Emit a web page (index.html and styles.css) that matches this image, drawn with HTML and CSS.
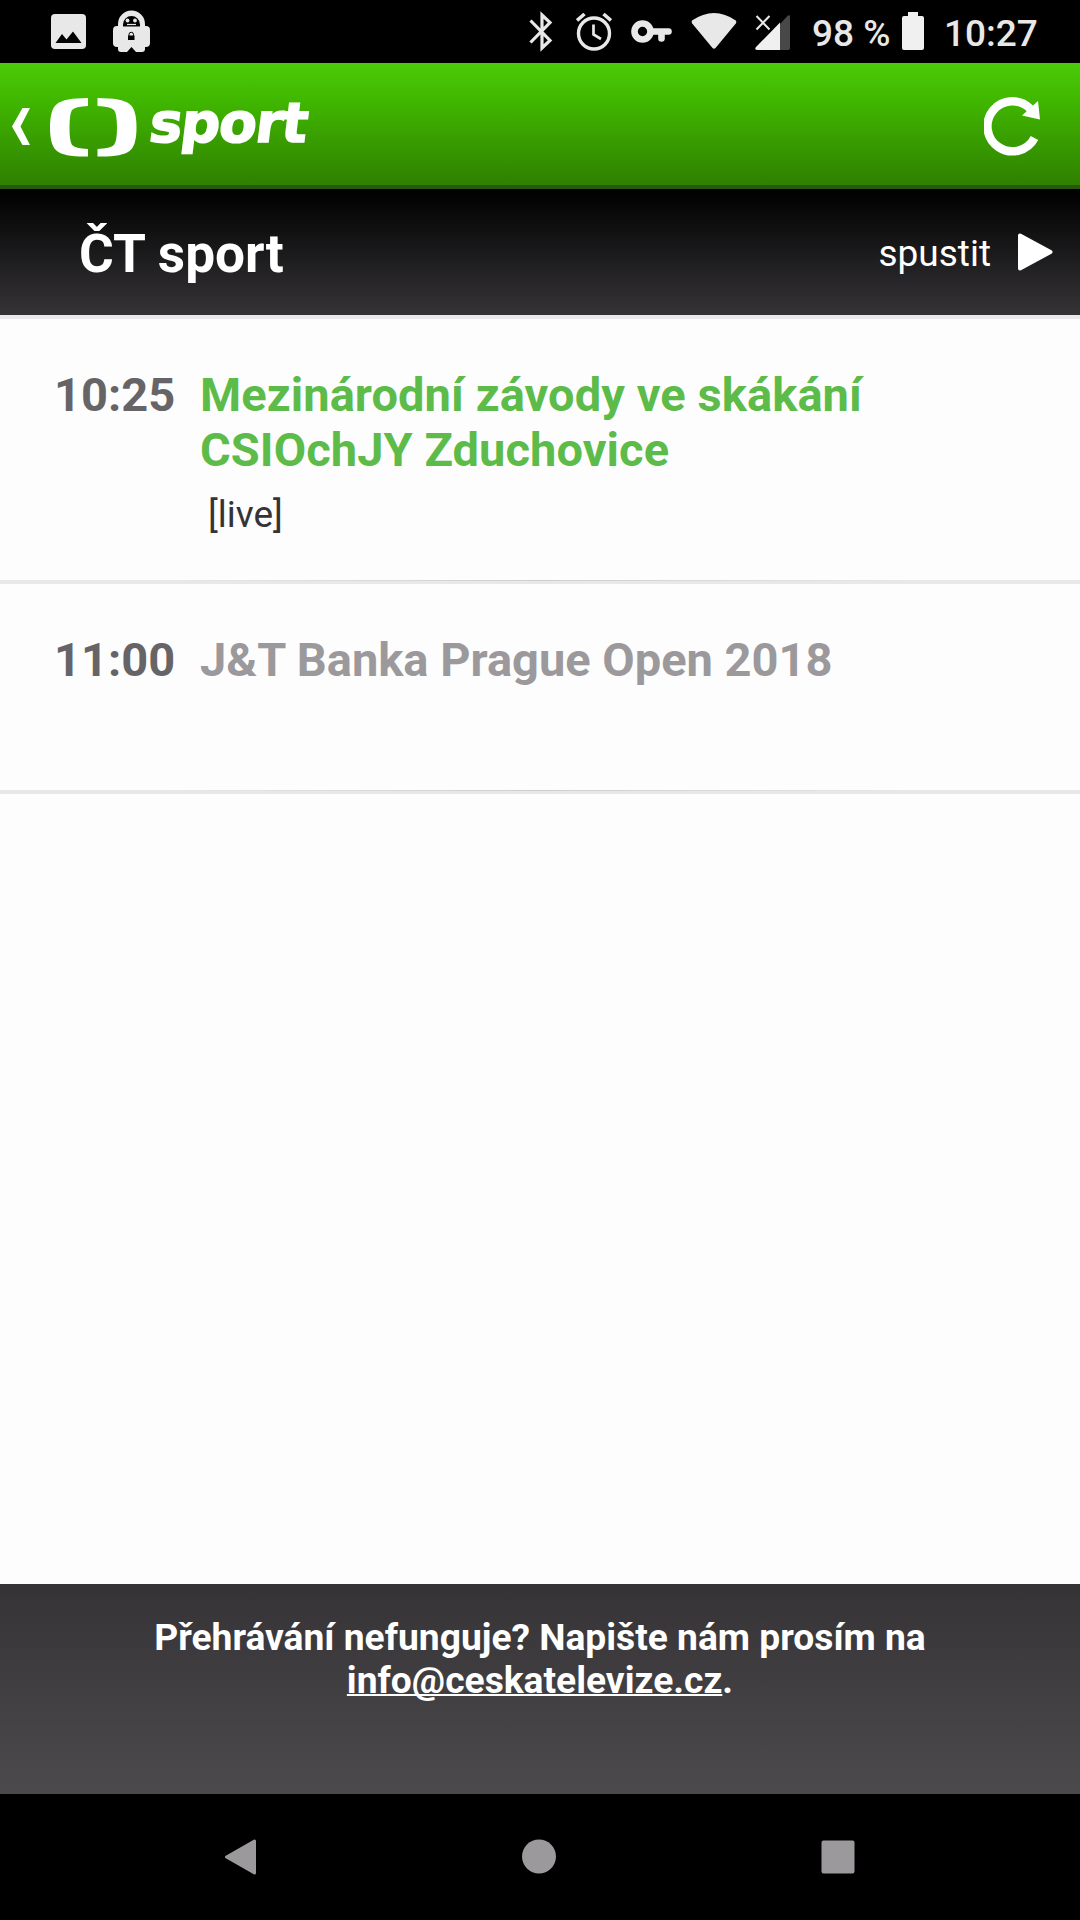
FILE: index.html
```html
<!DOCTYPE html>
<html lang="cs">

<head>
	<meta charset="utf-8">
	<title>ČT sport</title>
	<link rel="stylesheet" href="styles.css">
</head>

<body>

	<div class="statusbar">
		<svg class="st_image" width="35" height="63" viewBox="0 0 35 63">
			<rect x="0" y="14" width="35" height="35" rx="4" fill="#e8e8e8" />
			<path d="M4.500 43L11 34l4.500 5.500L22 31.500 30.500 43z" fill="#000" />
		</svg>
		<svg class="st_lock" width="37" height="63" viewBox="0 0 37 63">
			<path d="M0 30q0-4 4-4h1v-2a13.500 13.500 0 0 1 27 0v2h1q4 0 4 4v13q0 4-4 4h-1v2q0 3-3 3h-6l-4.500-5-4.500 5H8q-3 0-3-3v-2H4q-4 0-4-4z" fill="#e8e8e8" />
			<path d="M10 26.500v-2a8.500 8.500 0 0 1 17 0v2zM15 35.500h6.500V40H15z" fill="#000" />
			<path d="M16 36v-1.500a2.200 2.200 0 0 1 4.500 0V36" fill="none" stroke="#000" stroke-width="1" />
			<path d="M14 24.500h9" stroke="#e8e8e8" stroke-width="1.200" />
			<circle cx="14.500" cy="20.500" r="1.900" fill="#e8e8e8" />
			<circle cx="22" cy="20.500" r="1.900" fill="#e8e8e8" />
		</svg>
		<svg class="st_bt" width="24" height="63" viewBox="0 0 24 63">
			<path d="M1.500 20.500L21 40.500 13 48V15l8 7.500-19.500 20" fill="none" stroke="#e8e8e8" stroke-width="3.200" />
		</svg>
		<svg class="st_alarm" width="36" height="63" viewBox="0 0 36 63">
			<circle cx="18" cy="33.500" r="15.500" fill="none" stroke="#e8e8e8" stroke-width="3.400" />
			<path d="M17.500 24.500v10l7.500 4.500" fill="none" stroke="#e8e8e8" stroke-width="2.700" />
			<path d="M1 20.500l7.500-6.500M35 20.500L27.500 14" stroke="#e8e8e8" stroke-width="3.600" />
		</svg>
		<svg class="st_key" width="41" height="63" viewBox="0 0 41 63">
			<circle cx="11.500" cy="31.500" r="8" fill="none" stroke="#e8e8e8" stroke-width="6.600" />
			<path d="M20 31.500h17.500M30.500 31.500v7" stroke="#e8e8e8" stroke-width="6.600" stroke-linecap="round" />
		</svg>
		<svg class="st_wifi" width="46" height="63" viewBox="0 0 46 63">
			<path d="M1 20.500Q0 22 1.200 23.500L21.500 48q1.500 1.500 3 0L44.800 23.500Q46 22 44.800 20.500 34 13 23 13T1 20.500z" fill="#e8e8e8" />
		</svg>
		<svg class="st_signal" width="36" height="63" viewBox="0 0 36 63">
			<path d="M25 24l8-8.500q2-1 2 1V48q0 2-2 2h-8z" fill="#484848" />
			<path d="M25 22.500V50H2q-3-.5-1-3z" fill="#f0f0f0" />
			<path d="M1.500 16l13 13.500M14.500 16l-13 13.500" stroke="#e8e8e8" stroke-width="2" />
		</svg>
		<span class="percent">98 %</span>
		<svg class="st_battery" width="22" height="63" viewBox="0 0 22 63">
			<path d="M6 12h10v4h4q2 0 2 2v30q0 2-2 2H2q-2 0-2-2V18q0-2 2-2h4z" fill="#f0f0f0" />
		</svg>
		<span class="clock">10:27</span>
	</div>

	<div class="header">
		<svg class="back" width="18" height="38" viewBox="0 0 18 38">
			<path d="M10.500 0H18L8.500 18.500 18 37h-7.500L0 18.500z" fill="#fff" />
		</svg>
		<svg class="logo" width="87" height="59" viewBox="0 0 87 59">
			<path d="M38 0V8Q25 8.500 22 12q-2.500 4-2.500 17.500T22 47q3 3.500 16 4v7.500Q14 59 7 53 0 48 0 29.500T7 6Q14 0 38 0z" fill="#fff" />
			<path d="M47.500 0V8q13 .5 16.500 4 3 4 3 17.500T64 47q-3.500 3.500-16.500 4v7.500Q72 59 79.500 53 86.500 48 86.500 29.500T79.500 6Q72 0 47.500 0z" fill="#fff" />
		</svg>
		<span class="logo_text">sport</span>
		<svg class="reload" width="58" height="60" viewBox="0 0 58 60">
			<path d="M46 12.500A25 25 0 1 0 50.500 42" fill="none" stroke="#fff" stroke-width="8.500" />
			<path d="M54 5l2 18.500L38 19.500z" fill="#fff" />
		</svg>
	</div>

	<div class="channel">
		<h1>ČT sport</h1>
		<span class="play_label">spustit</span>
		<svg class="play" width="36" height="40" viewBox="0 0 36 40">
			<path d="M3 3.500v33L33.500 20z" fill="#fff" stroke="#fff" stroke-width="4" stroke-linejoin="round" />
		</svg>
	</div>

	<div class="programme">
		<div class="item current">
			<div class="time">10:25</div>
			<div class="info">
				<div class="name">Mezinárodní závody ve skákání<br>CSIOchJY Zduchovice</div>
				<div class="note">[live]</div>
			</div>
		</div>
		<div class="item next">
			<div class="time">11:00</div>
			<div class="info">
				<div class="name">J&amp;T Banka Prague Open 2018</div>
			</div>
		</div>
	</div>

	<div class="footer">
		Přehrávání nefunguje? Napište nám prosím na<br>
		<a href="mailto:info@ceskatelevize.cz">info@ceskatelevize.cz</a>.
	</div>

	<div class="navbar">
		<svg width="32" height="36" viewBox="0 0 32 36">
			<path d="M29.500 2v32L1.500 18z" fill="#9b999c" stroke="#9b999c" stroke-width="3" stroke-linejoin="round" />
		</svg>
		<svg width="34" height="36" viewBox="0 0 34 36">
			<circle cx="17" cy="17.500" r="17" fill="#9b999c" />
		</svg>
		<svg width="34" height="36" viewBox="0 0 34 36">
			<rect x=".5" y="1.500" width="33" height="33" rx="2" fill="#9b999c" />
		</svg>
	</div>

</body>

</html>
```
FILE: styles.css
```css
* {
	box-sizing: border-box;
}

body {
	margin: 0;
	width: 1080px;
	height: 1920px;
	display: flex;
	flex-direction: column;
	background: #fdfdfd;
	font-family: Roboto, "Noto Sans", sans-serif;
	overflow: hidden;
}

svg {
	display: block;
	flex: none;
}

/* phone status bar */
.statusbar {
	height: 63px;
	display: flex;
	background: #000;
	color: #e8e8e8;
	font-size: 37px;
	line-height: 67px;
	font-weight: 500;
	white-space: nowrap;
}

.st_image {
	margin-left: 51px;
}

.st_lock {
	margin-left: 27px;
}

.st_bt {
	margin-left: 379px;
}

.st_alarm {
	margin-left: 23px;
}

.st_key {
	margin-left: 19px;
}

.st_wifi {
	margin-left: 19px;
}

.st_signal {
	margin-left: 18px;
}

.percent {
	width: 90px;
	margin-left: 21px;
}

.clock {
	margin-left: 20px;
}

/* green app header */
.header {
	height: 126px;
	display: flex;
	align-items: flex-start;
	background: linear-gradient(#4bcb09, #41b900 28%, #2f8000);
	border-bottom: 4px solid #28580c;
	color: #fff;
}

.back {
	margin: 45px 0 0 12px;
}

.logo {
	margin: 35px 0 0 20px;
}

.logo_text {
	margin: 20px 0 0 13px;
	font-family: "DejaVu Sans", sans-serif;
	font-size: 55px;
	line-height: 80px;
	font-weight: 700;
	letter-spacing: -1.3px;
	-webkit-text-stroke: 1.6px #fff;
	transform: skewX(-7deg);
}

.reload {
	margin: 33px 38px 0 auto;
}

.channel {
	height: 126px;
	display: flex;
	align-items: center;
	padding: 0 27px 0 79px;
	background: linear-gradient(#000, #353336);
	color: #fff;
}

.channel h1 {
	margin: 3px auto 0 0;
	font-size: 53.2px;
	line-height: 60px;
	font-weight: 700;
}

.play_label {
	margin-top: 3px;
	font-size: 37px;
	line-height: 42px;
}

.play {
	margin-left: 26px;
}

/* programme list */
.programme {
	flex: 1;
	border-top: 4px solid #ebe9ec;
}

.item {
	display: flex;
	padding: 48px 55px 0 54px;
	background:
		linear-gradient(90deg, transparent 15%, #cfcdd0 50%, transparent 85%) 0 calc(100% - 3px) / 100% 1px no-repeat,
		linear-gradient(#e9e7ea, #e9e7ea) 0 100% / 100% 4px no-repeat;
	font-size: 47px;
	line-height: 55px;
	font-weight: 700;
}

.current {
	height: 265px;
}

.next {
	height: 210px;
}

.time {
	width: 146px;
	color: #676468;
}

.current .name {
	color: #5cbb49;
	letter-spacing: .08px;
}

.next .name {
	color: #9b999c;
}

.note {
	margin: 17px 0 0 8px;
	color: #353336;
	font-size: 37px;
	line-height: 42px;
	font-weight: 400;
}

.footer {
	height: 210px;
	padding-top: 32px;
	background: linear-gradient(#353336, #4c4a4d);
	color: #fff;
	font-size: 37.2px;
	line-height: 43px;
	font-weight: 700;
	text-align: center;
}

.footer a {
	color: #fff;
	text-decoration-thickness: 2px;
	text-decoration-skip-ink: none;
}

.navbar {
	height: 126px;
	display: flex;
	align-items: center;
	justify-content: space-between;
	padding: 0 225px;
	background: #000;
}
```
